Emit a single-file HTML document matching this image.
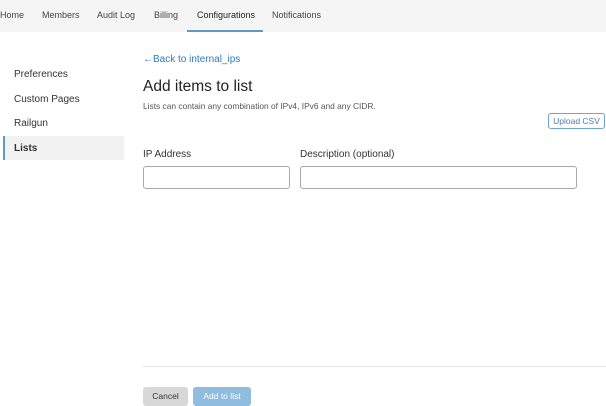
<!DOCTYPE html>
<html><head><style>
*{margin:0;padding:0;box-sizing:border-box}
body{width:606px;height:406px;overflow:hidden;background:#fff;font-family:"Liberation Sans",sans-serif;color:#333;position:relative}
.a{position:absolute;white-space:nowrap}
.nav{position:absolute;left:0;top:0;width:606px;height:32px;background:#f5f5f5}
.nv{position:absolute;top:10px;font-size:9px;color:#444}
.side{position:absolute;left:14px;font-size:10px;color:#333}
input{position:absolute;border:1px solid #a9a9a9;border-radius:3px;background:#fff;height:23px}
</style></head><body>
<div class="nav">
<span class="nv" style="left:0">Home</span>
<span class="nv" style="left:42px">Members</span>
<span class="nv" style="left:97px">Audit Log</span>
<span class="nv" style="left:154px">Billing</span>
<span class="nv" style="left:197px;color:#222">Configurations</span>
<span class="nv" style="left:272px">Notifications</span>
<div style="position:absolute;left:187px;top:30px;width:76px;height:2px;background:#5d9ac6"></div>
</div>
<span class="side a" style="top:69px">Preferences</span>
<span class="side a" style="top:94px">Custom Pages</span>
<span class="side a" style="top:118px">Railgun</span>
<div style="position:absolute;left:3px;top:136px;width:121px;height:24px;background:#f2f2f2;border-left:2px solid #5d9ac6"></div>
<span class="side a" style="top:143px;font-weight:bold;color:#333">Lists</span>
<span class="a" style="left:143px;top:54px;font-size:10px;color:#2f7bbf">←Back to internal_ips</span>
<span class="a" style="left:143px;top:78px;font-size:15.5px;color:#222">Add items to list</span>
<span class="a" style="left:143px;top:101px;font-size:8.4px;color:#555">Lists can contain any combination of IPv4, IPv6 and any CIDR.</span>
<div class="a" style="left:548px;top:113px;width:57px;height:16px;border:1px solid #6ea4cf;border-radius:3px;font-size:8.5px;color:#4a7fab;text-align:center;line-height:14px">Upload CSV</div>
<span class="a" style="left:143px;top:149px;font-size:10px;color:#333">IP Address</span>
<span class="a" style="left:300px;top:149px;font-size:10px;color:#333">Description (optional)</span>
<input style="left:143px;top:166px;width:147px">
<input style="left:300px;top:166px;width:277px">
<div style="position:absolute;left:143px;top:366px;width:463px;height:1px;background:#e6e6e6"></div>
<div class="a" style="left:143px;top:387px;width:45px;height:19px;background:#d8d8d8;border-radius:3px;font-size:8.5px;color:#333;text-align:center;line-height:19px">Cancel</div>
<div class="a" style="left:193px;top:387px;width:58px;height:19px;background:#8fbcdf;border-radius:3px;font-size:8.5px;color:#fff;text-align:center;line-height:19px">Add to list</div>
</body></html>
